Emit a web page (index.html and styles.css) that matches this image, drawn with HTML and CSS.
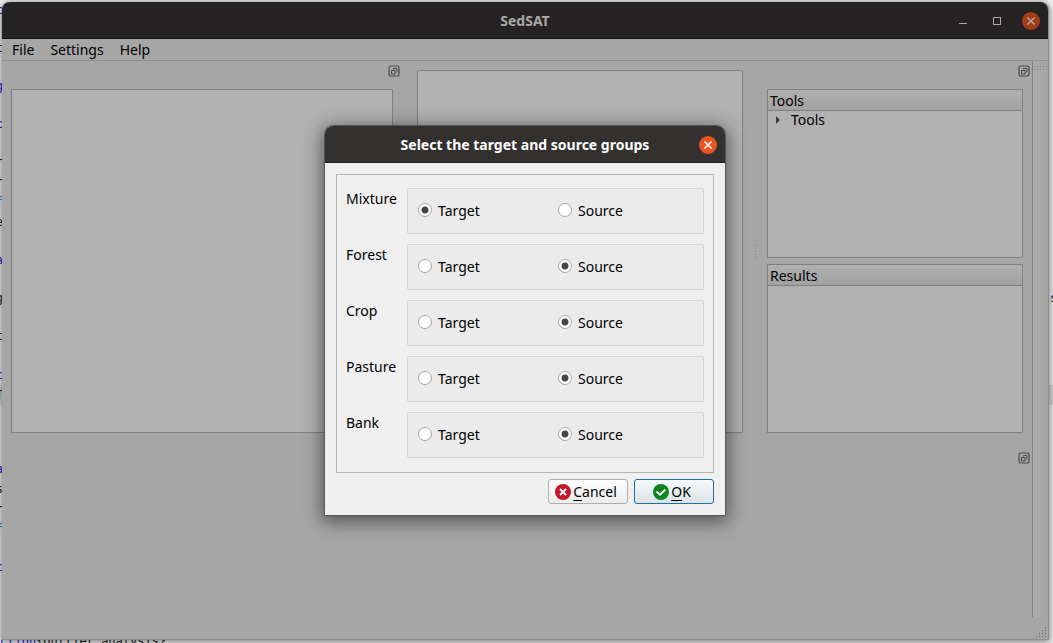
FILE: index.html
```html
<!DOCTYPE html>
<html lang="en">
<head>
<meta charset="utf-8">
<title>SedSAT</title>
<link rel="stylesheet" href="styles.css">
</head>
<body>
<svg class="defs" aria-hidden="true">
  <symbol id="float" viewBox="0 0 12 12">
    <rect x="1" y="1" width="10" height="10" rx="1.5" fill="none" stroke="#4a4a4a" stroke-width="1.2"/>
    <path d="M5.5 4.5V3.5H9V7H8M3.5 5.5H7V9H3.5Z" fill="none" stroke="#4a4a4a"/>
  </symbol>
  <symbol id="cross" viewBox="0 0 18 18">
    <path d="M5.5 5.5L12.5 12.5M12.5 5.5L5.5 12.5" fill="none" stroke="currentColor" stroke-width="1.5"/>
  </symbol>
</svg>

<div class="editor" aria-hidden="true">
  <div class="line blue"><span class="edge">c</span></div>
  <div class="line"></div>
  <div class="line"><span class="edge">t</span></div>
  <div class="line"></div>
  <div class="line blue"><span class="edge">g</span></div>
  <div class="line"></div>
  <div class="line blue"><span class="edge">c</span></div>
  <div class="line"></div>
  <div class="line"><span class="edge">r</span></div>
  <div class="line"><span class="edge">r</span></div>
  <div class="line sky"><span class="edge">f</span></div>
  <div class="line"><span class="edge">e</span></div>
  <div class="line"></div>
  <div class="line blue"><span class="edge">a</span></div>
  <div class="line"></div>
  <div class="line"><span class="edge">g</span><span class="end">s</span></div>
  <div class="line"></div>
  <div class="line"><span class="edge">t</span></div>
  <div class="line"></div>
  <div class="line blue"><span class="edge">c</span></div>
  <div class="line current"><span class="edge">T</span></div>
  <div class="line"></div>
  <div class="line"></div>
  <div class="line"></div>
  <div class="line blue"><span class="edge">a</span></div>
  <div class="line"><span class="edge">s</span></div>
  <div class="line"><span class="edge">r</span></div>
  <div class="line sky"><span class="edge">f</span></div>
  <div class="line"></div>
  <div class="line blue"><span class="edge">c</span></div>
  <div class="line"></div>
  <div class="line"></div>
  <div class="line"></div>
  <div class="line"><span class="blue">ction</span>{Outlier analysis}</div>
</div>

<div class="window">
  <header class="titlebar">
    <h1 class="title">SedSAT</h1>
    <div class="controls">
      <button class="control" aria-label="Minimize"><svg viewBox="0 0 18 18"><path d="M5 11.5H13" stroke="currentColor"/></svg></button>
      <button class="control" aria-label="Maximize"><svg viewBox="0 0 18 18"><rect x="5.5" y="5.5" width="7" height="7" fill="none" stroke="currentColor"/></svg></button>
      <button class="control close" aria-label="Close"><svg><use href="#cross"/></svg></button>
    </div>
  </header>
  <nav class="menubar">
    <button class="menu">File</button>
    <button class="menu">Settings</button>
    <button class="menu">Help</button>
  </nav>
  <div class="workspace">
    <main class="docks">
      <section class="dock">
        <button class="float" aria-label="Float panel"><svg><use href="#float"/></svg></button>
        <div class="pane"></div>
      </section>
      <section class="center"><div class="pane"></div></section>
      <section class="dock split">
        <button class="float" aria-label="Float tools"><svg><use href="#float"/></svg></button>
        <span class="splitter"></span>
        <div class="pane">
          <h2 class="head">Tools</h2>
          <div class="item"><svg class="arrow" viewBox="0 0 5 8"><path d="M0 0L4 4L0 8Z" fill="#3c3c3c"/></svg>Tools</div>
        </div>
        <div class="pane"><h2 class="head">Results</h2></div>
      </section>
      <section class="dock bottom">
        <button class="float" aria-label="Float output"><svg><use href="#float"/></svg></button>
      </section>
    </main>
    <aside class="toolbar"><div class="handle"></div></aside>
  </div>
  <footer class="status">
    <svg class="grip" viewBox="0 0 11 11"><path d="M9 0h1v1h-1zM6 3h1v1h-1zM9 3h1v1h-1zM3 6h1v1h-1zM6 6h1v1h-1zM9 6h1v1h-1zM0 9h1v1h-1zM3 9h1v1h-1zM6 9h1v1h-1zM9 9h1v1h-1z" fill="#6e6e6e"/></svg>
  </footer>

  <form class="dialog" role="dialog" aria-labelledby="dialog-title">
    <header class="titlebar active">
      <h2 class="title" id="dialog-title">Select the target and source groups</h2>
      <div class="controls"><button type="button" class="control close" aria-label="Close dialog"><svg><use href="#cross"/></svg></button></div>
    </header>
    <div class="content">
      <div class="groups">
        <span class="name" id="g1">Mixture</span>
        <div class="choices" role="radiogroup" aria-labelledby="g1">
          <label class="choice"><input type="radio" name="mixture" checked>Target</label>
          <label class="choice"><input type="radio" name="mixture">Source</label>
        </div>
        <span class="name" id="g2">Forest</span>
        <div class="choices" role="radiogroup" aria-labelledby="g2">
          <label class="choice"><input type="radio" name="forest">Target</label>
          <label class="choice"><input type="radio" name="forest" checked>Source</label>
        </div>
        <span class="name" id="g3">Crop</span>
        <div class="choices" role="radiogroup" aria-labelledby="g3">
          <label class="choice"><input type="radio" name="crop">Target</label>
          <label class="choice"><input type="radio" name="crop" checked>Source</label>
        </div>
        <span class="name" id="g4">Pasture</span>
        <div class="choices" role="radiogroup" aria-labelledby="g4">
          <label class="choice"><input type="radio" name="pasture">Target</label>
          <label class="choice"><input type="radio" name="pasture" checked>Source</label>
        </div>
        <span class="name" id="g5">Bank</span>
        <div class="choices" role="radiogroup" aria-labelledby="g5">
          <label class="choice"><input type="radio" name="bank">Target</label>
          <label class="choice"><input type="radio" name="bank" checked>Source</label>
        </div>
      </div>
      <div class="actions">
        <button type="button" class="action"><svg viewBox="0 0 16 16"><circle cx="8" cy="8" r="8" fill="#c7162b"/><path d="M5 5L11 11M11 5L5 11" stroke="#fff" stroke-width="2"/></svg><span><u>C</u>ancel</span></button>
        <button type="button" class="action default"><svg viewBox="0 0 16 16"><circle cx="8" cy="8" r="8" fill="#0e8420"/><path d="M3.5 7.5L7 10.7L12.5 5.5" fill="none" stroke="#fff" stroke-width="1.8"/></svg><span><u>O</u>K</span></button>
      </div>
    </div>
  </form>
</div>
</body>
</html>
```
FILE: styles.css
```css
* {
  box-sizing: border-box;
}

body {
  display: flex;
  height: 100vh;
  margin: 0;
  padding: 2px 4px 3px 2px;
  overflow: hidden;
  background: #f4f4f4;
  color: #000;
  font: 14px/20px "Noto Sans", "Open Sans", sans-serif;
}

button {
  padding: 0;
  border: 0;
  background: none;
  color: inherit;
  font: inherit;
}

svg {
  display: block;
}

.defs {
  position: absolute;
  width: 0;
  height: 0;
}

.editor {
  position: absolute;
  inset: 0 0 -8px;
  display: grid;
  grid-auto-rows: 1fr;
  color: #222;
  font: 12px/20px "DejaVu Sans Mono", monospace;
}

.line {
  display: flex;
  white-space: pre;
}

.edge {
  display: flex;
  justify-content: flex-end;
  width: 3px;
}

.end {
  width: 3px;
  margin-left: auto;
}

.blue {
  color: #2a1ee0;
}

.sky {
  color: #2a8ad8;
}

.current {
  background: #dcdcdc;
}

.window {
  position: relative;
  display: flex;
  flex: 1;
  flex-direction: column;
  border: solid #8c8c8c;
  border-width: 0 1px 1px 0;
  border-radius: 8px 8px 0 0;
  background: #a6a6a6;
  box-shadow: 0 1px 7px 1px rgba(0, 0, 0, 0.5);
}

.titlebar {
  display: grid;
  grid-template-columns: 1fr auto 1fr;
  align-items: center;
  height: 37px;
  padding: 1px 8px 0;
  border-bottom: 1px solid #111;
  border-radius: 8px 8px 0 0;
  background: #242222;
  color: #a9a8a6;
}

.title {
  grid-column: 2;
  margin: 0;
  font-size: 14px;
  font-weight: 700;
}

.controls {
  display: flex;
  justify-content: flex-end;
  gap: 16px;
}

.control {
  width: 18px;
  height: 18px;
  border-radius: 50%;
}

.control svg {
  width: 18px;
  height: 18px;
}

.window .close {
  background: #a43b19;
}

.menubar {
  display: flex;
  gap: 16px;
  height: 22px;
  padding: 0 10px;
  border-bottom: 1px solid #8f8f8f;
}

.workspace {
  display: flex;
  flex: 1;
}

.docks {
  display: grid;
  flex: 1;
  grid-template: 380fr 175fr / 400fr 355fr 275fr;
}

.dock {
  position: relative;
  display: flex;
  flex-direction: column;
  gap: 6px;
  padding: 28px 9px 9px;
}

.split {
  padding-left: 10px;
}

.center {
  display: flex;
  padding: 9px 14px 9px 15px;
}

.bottom {
  grid-column: 1 / -1;
}

.float {
  position: absolute;
  top: 4px;
  right: 2px;
}

.bottom .float {
  top: 10px;
}

.float svg {
  width: 12px;
  height: 12px;
}

.splitter {
  position: absolute;
  top: 184px;
  left: -2px;
  width: 1px;
  height: 15px;
  background: repeating-linear-gradient(#808080 0 1px, transparent 1px 3px);
}

.pane {
  flex: 1;
  border: 1px solid #808080;
  background: #b1b1b1;
}

.head {
  height: 21px;
  margin: 0;
  padding: 1px 2px 0;
  border-bottom: 1px solid #808080;
  background: linear-gradient(#b0b0b0, #a1a1a1);
  font-size: 14px;
  font-weight: 400;
}

.item {
  display: flex;
  gap: 10px;
  align-items: center;
  padding-left: 8px;
  line-height: 18px;
}

.arrow {
  width: 5px;
  height: 8px;
}

.toolbar {
  width: 16px;
  padding: 5px 1px;
  border-left: 1px solid #808080;
  background: linear-gradient(90deg, #acacac, #a3a3a3);
}

.handle {
  height: 6px;
  background: conic-gradient(#808080 25%, transparent 0) -1px 0 / 2px 2px;
  background: linear-gradient(#a8a8a8, #a8a8a8) 0 1px / 100% 2px no-repeat, linear-gradient(#a8a8a8, #a8a8a8) 0 4px / 100% 2px no-repeat, repeating-linear-gradient(90deg, #808080 0 1px, transparent 1px 3px);
}

.status {
  display: flex;
  align-items: flex-end;
  justify-content: flex-end;
  height: 22px;
  padding: 1px;
}

.grip {
  width: 11px;
  height: 11px;
}

.dialog {
  position: absolute;
  inset: 0;
  width: 402px;
  height: fit-content;
  margin: auto;
  border: 1px solid #565656;
  border-radius: 9px 9px 0 0;
  background: #efefef;
  box-shadow: 0 4px 18px 2px rgba(0, 0, 0, 0.5);
}

.dialog .titlebar {
  border-color: #1d1b1b;
  background: #333030;
  color: #fff;
}

.dialog .close {
  background: #e95420;
}

.content {
  padding: 11px;
}

.groups {
  display: grid;
  grid-template-columns: 53px 1fr;
  gap: 10px 8px;
  padding: 13px 9px 14px;
  border: 1px solid #b4b4b4;
}

.name {
  padding-top: 1px;
}

.choices {
  display: grid;
  grid-template-columns: 1fr 1fr;
  align-items: center;
  height: 46px;
  padding: 0 5px 0 10px;
  border: 1px solid #d5d5d5;
  border-radius: 2px;
  background: #ebebeb;
}

.choice {
  display: flex;
  gap: 6px;
  align-items: center;
}

.choice input {
  width: 14px;
  height: 14px;
  margin: 0 0 2px;
  border: 1px solid #a6a6a6;
  border-radius: 50%;
  appearance: none;
  background: #fff;
}

.choice input:checked {
  background: radial-gradient(circle, #444 3px, #fff 4px);
}

.actions {
  display: flex;
  gap: 6px;
  justify-content: flex-end;
  padding-top: 6px;
}

.action {
  display: flex;
  gap: 2px;
  align-items: center;
  justify-content: center;
  width: 80px;
  height: 25px;
  padding-right: 4px;
  border: 1px solid #adadad;
  border-radius: 3px;
  background: linear-gradient(#fdfdfd, #ececec);
}

.action svg {
  width: 16px;
  height: 16px;
}

.action u {
  text-underline-offset: 3px;
}

.default {
  border-color: #1f6fa3;
  background: linear-gradient(#f7fafc, #dbe2e8);
}
```
